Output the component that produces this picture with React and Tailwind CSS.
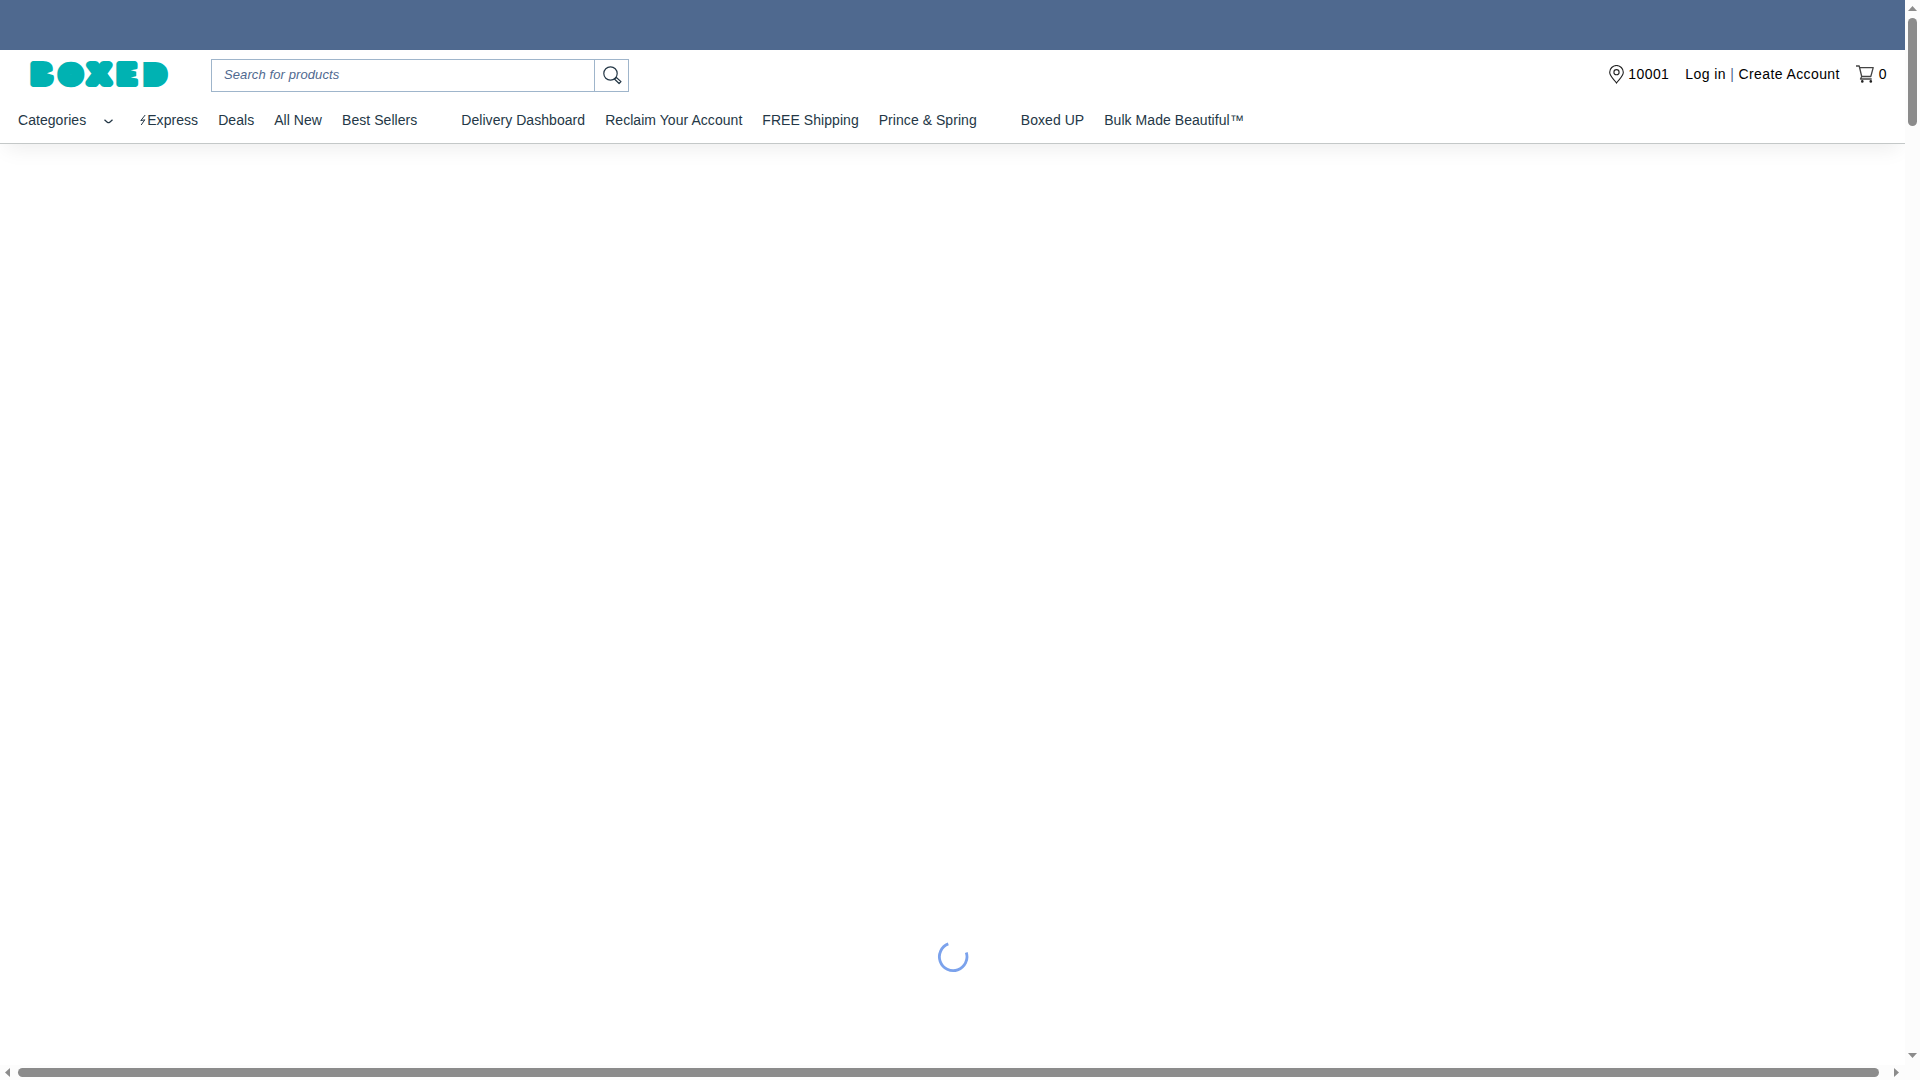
import React from 'react';

const navItems = [
  { label: 'Express', spacing: 'ml-[27px]', icon: true },
  { label: 'Deals', spacing: 'ml-5' },
  { label: 'All New', spacing: 'ml-5' },
  { label: 'Best Sellers', spacing: 'ml-5' },
  { label: 'Delivery Dashboard', spacing: 'ml-11' },
  { label: 'Reclaim Your Account', spacing: 'ml-5' },
  { label: 'FREE Shipping', spacing: 'ml-5' },
  { label: 'Prince & Spring', spacing: 'ml-5' },
  { label: 'Boxed UP', spacing: 'ml-11' },
  { label: 'Bulk Made Beautiful™', spacing: 'ml-5' },
];

// The heavy stroke closes the counters, which gives the rounded wordmark
const logoLetters = [
  { char: 'B', x: 11.8, y: 23.2, size: 29.5, stroke: 6, width: 21, join: 'round' },
  { char: 'O', x: 40.7, y: 20.8, size: 22, stroke: 10.5, width: 18, join: 'round' },
  { char: 'X', x: 69.2, y: 22, size: 26, stroke: 8, width: 19.5, join: 'round' },
  { char: 'E', x: 96.8, y: 23.2, size: 29.5, stroke: 6, width: 19, join: 'round' },
  { char: 'D', x: 125.3, y: 20.6, size: 22, stroke: 10, width: 16.6, join: 'miter' },
];

const Logo = () => (
  <svg className="w-[140px] h-[26px] ml-[30px] overflow-visible" viewBox="0 0 140 26" fill="#00b2b2" stroke="#00b2b2">
    {logoLetters.map((l) => (
      <text
        key={l.char}
        x={l.x}
        y={l.y}
        fontSize={l.size}
        strokeWidth={l.stroke}
        strokeLinejoin={l.join}
        textAnchor="middle"
        textLength={l.width}
        lengthAdjust="spacingAndGlyphs"
        fontFamily="Liberation Sans, Arial, sans-serif"
        fontWeight="700"
      >
        {l.char}
      </text>
    ))}
    {/* notches on the right side of the B and the E */}
    <path
      d="M24.5 9.5L17 12.3L24.5 14.5zM109 7.8L100.8 9.2L106 10.5L109 11zM109 14.5L106 15.2L100.8 16.6L109 17.8z"
      fill="#fff"
      stroke="none"
    />
    <path d="M106.4 10v6h3v-6z" fill="#fff" stroke="none" />
  </svg>
);

const SearchIcon = () => (
  <svg className="w-[19px] h-[19px]" viewBox="0 0 19 19" fill="none" stroke="#243746">
    <circle cx="7.5" cy="7.5" r="6.7" strokeWidth="1.2" />
    <path d="M11.4 13l1.7-1.7 4.9 4.3-1.9 1.9z" strokeWidth="1.2" strokeLinejoin="round" />
  </svg>
);

const PinIcon = () => (
  <svg className="w-[15px] h-[19px]" viewBox="0 0 15 19" fill="none" stroke="#222" strokeWidth="1.1">
    <path d="M7.5 18C5.8 15 .7 11.6.7 7.3a6.8 6.8 0 0 1 13.6 0C14.3 11.6 9.2 15 7.5 18z" />
    <circle cx="7.5" cy="7.2" r="2.6" />
  </svg>
);

const CartIcon = () => (
  <svg className="w-[18px] h-[18px]" viewBox="0 0 18 18" fill="none" stroke="#444" strokeWidth="1.3">
    <path d="M0 1h3.2l2.5 10.5h9.1L17.2 2.6H3.7M5.7 11.5L4.5 14h11.2" strokeLinejoin="round" />
    <circle cx="6.3" cy="16.4" r="1.3" fill="#222" stroke="none" />
    <circle cx="14.8" cy="16.4" r="1.3" fill="#222" stroke="none" />
  </svg>
);

const Arrow = ({ points, className }) => (
  <svg className={className} viewBox="0 0 9 9" fill="#8b8b8b">
    <polygon points={points} />
  </svg>
);

const Header = () => (
  <header className="relative h-[94px] shrink-0 bg-white border-b border-[#c4c8c8] shadow-[0_10px_20px_-6px_rgba(0,0,0,0.08)]">
    <div className="flex items-start h-[60px]">
      <div className="pt-[11px]">
        <Logo />
      </div>
      <div className="flex ml-[41px] mt-[9px] w-[418px] h-[33px] border border-[#9fb5cb]">
        <span className="flex-1 pl-[12px] pt-[5px] text-[13px] leading-[20px] italic text-[#4f698f] tracking-[0.1px]">
          Search for products
        </span>
        <button className="w-[34px] border-l border-[#9fb5cb] pl-2 pt-[6px] flex items-start">
          <SearchIcon />
        </button>
      </div>
      <div className="ml-auto mr-[18px] mt-[14px] flex items-center h-5 text-sm leading-5 text-black tracking-[0.4px] whitespace-nowrap">
        <PinIcon />
        <span className="ml-1">10001</span>
        <span className="ml-4">
          Log in <span className="text-[#4f698f]">|</span> Create Account
        </span>
        <span className="ml-4">
          <CartIcon />
        </span>
        <span className="ml-[5px]">0</span>
      </div>
    </div>
    <nav className="flex items-center h-5 pl-[18px] text-sm leading-5 text-[#243746] whitespace-nowrap tracking-[0.05px]">
      <span>Categories</span>
      <svg className="ml-[18px] mt-[2px] w-[9px] h-[5px]" viewBox="0 0 9 5" fill="none" stroke="#243746" strokeWidth="1.3">
        <path d="M.5.8L3.5 3.4Q4.5 4 5.5 3.4L8.5.8" />
      </svg>
      {navItems.map((item) => (
        <a key={item.label} className={item.spacing}>
          {item.icon && (
            <svg className="inline-block w-[7px] h-[12px] -mt-[2px]" viewBox="0 0 7 12" fill="none" stroke="#243746">
              <path d="M5.2 1L.8 6.6l4-.8L1.2 11" />
            </svg>
          )}
          {item.label}
        </a>
      ))}
    </nav>
  </header>
);

const VerticalScrollbar = () => (
  <div className="w-[15px] shrink-0 bg-[#fcfcfc] flex flex-col items-center">
    <Arrow className="w-[9px] h-[9px] mt-1" points="0,7 4.5,2 9,7" />
    <div className="w-[9px] h-[108px] mt-[5px] rounded-full bg-[#8b8b8b]" />
    <Arrow className="w-[9px] h-[9px] mt-auto mb-[5px]" points="0,2 9,2 4.5,7" />
  </div>
);

const HorizontalScrollbar = () => (
  <div className="h-[15px] shrink-0 bg-[#fcfcfc] flex items-center">
    <Arrow className="w-[9px] h-[9px] ml-[3px]" points="7,0 2,4.5 7,9" />
    <div className="h-[9px] w-[1861px] ml-[6px] rounded-full bg-[#8b8b8b]" />
    <Arrow className="w-[9px] h-[9px] ml-[13px]" points="2,0 7,4.5 2,9" />
  </div>
);

const App = () => (
  <div className="w-[1920px] h-[1080px] flex flex-col overflow-hidden bg-white font-['Liberation_Sans',Arial,sans-serif]">
    <div className="flex h-[1065px] shrink-0">
      <div className="w-[1905px] flex flex-col overflow-hidden">
        <div className="relative z-10 h-[50px] shrink-0 bg-[#4f698f]" />
        <Header />
        <main className="flex-1 flex flex-col items-center justify-end pb-[92px]">
          <svg className="w-[32px] h-[32px]" viewBox="0 0 32 32" fill="none" stroke="#7ba2ec" strokeWidth="2.8">
            <path d="M11.3 2.9A13.8 13.8 0 1 0 29.3 11.5" />
          </svg>
        </main>
      </div>
      <VerticalScrollbar />
    </div>
    <HorizontalScrollbar />
  </div>
);

export default App;
